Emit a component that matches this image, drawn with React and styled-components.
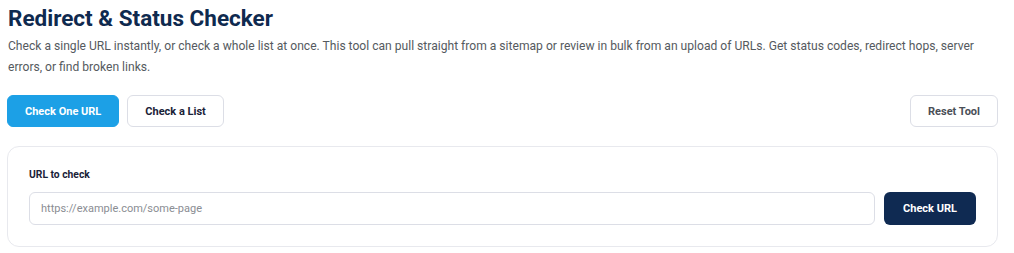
import styled, { createGlobalStyle } from "styled-components";

const GlobalStyle = createGlobalStyle`
* { box-sizing: border-box; }
body {
  margin: 0;
  background: #fff;
  font-family: Roboto, "Liberation Sans", sans-serif;
}
`;

const Page = styled.div`
  padding: 4px 16px 0 7px;
`;

const Title = styled.h1`
  margin: 0;
  padding-left: 1px;
  font-size: 22.5px;
  line-height: 28px;
  font-weight: 700;
  color: #0f2a4f;
`;

const Intro = styled.p`
  margin: 4px 0 0;
  padding-left: 1px;
  font-size: 12.1px;
  line-height: 21px;
  color: #555a60;
  max-width: 975px;
`;

const Toolbar = styled.div`
  display: flex;
  align-items: center;
  gap: 8px;
  margin-top: 17px;
`;

const Spacer = styled.div`
  flex: 1;
`;

const TabButton = styled.button`
  height: 32px;
  padding: 0 17px;
  border-radius: 6px;
  font-family: inherit;
  font-size: 11px;
  font-weight: 700;
  cursor: pointer;
  border: 1px solid ${(p) => (p.$active ? "#1ca0e6" : "#dcdee6")};
  background: ${(p) => (p.$active ? "#1ca0e6" : "#fff")};
  color: ${(p) => (p.$active ? "#fff" : p.$muted ? "#4a4f57" : "#1a2238")};
`;

const Card = styled.div`
  margin-top: 19px;
  border: 1px solid #e8e9ee;
  border-radius: 12px;
  padding: 21px 21px 21px;
`;

const Label = styled.label`
  display: block;
  font-size: 10.3px;
  line-height: 14px;
  font-weight: 700;
  color: #1a2238;
`;

const Row = styled.div`
  display: flex;
  gap: 9px;
  margin-top: 10px;
`;

const Input = styled.input`
  flex: 1;
  height: 33px;
  border: 1px solid #dcdee6;
  border-radius: 6px;
  padding: 0 11px;
  font-family: inherit;
  font-size: 11px;
  color: #333;
  outline: none;
  &::placeholder {
    color: #8a8d93;
  }
`;

const SubmitButton = styled.button`
  width: 92px;
  height: 33px;
  border: none;
  border-radius: 6px;
  background: #0f2a52;
  color: #fff;
  font-family: inherit;
  font-size: 11px;
  font-weight: 700;
  cursor: pointer;
`;

export default function App() {
  return (
    <>
      <GlobalStyle />
      <Page>
        <Title>Redirect &amp; Status Checker</Title>
        <Intro>
          Check a single URL instantly, or check a whole list at once. This tool can pull straight from a
          sitemap or review in bulk from an upload of URLs. Get status codes, redirect hops, server errors, or
          find broken links.
        </Intro>
        <Toolbar>
          <TabButton $active>Check One URL</TabButton>
          <TabButton>Check a List</TabButton>
          <Spacer />
          <TabButton $muted>Reset Tool</TabButton>
        </Toolbar>
        <Card>
          <Label htmlFor="url">URL to check</Label>
          <Row>
            <Input id="url" placeholder="https://example.com/some-page" />
            <SubmitButton>Check URL</SubmitButton>
          </Row>
        </Card>
      </Page>
    </>
  );
}
